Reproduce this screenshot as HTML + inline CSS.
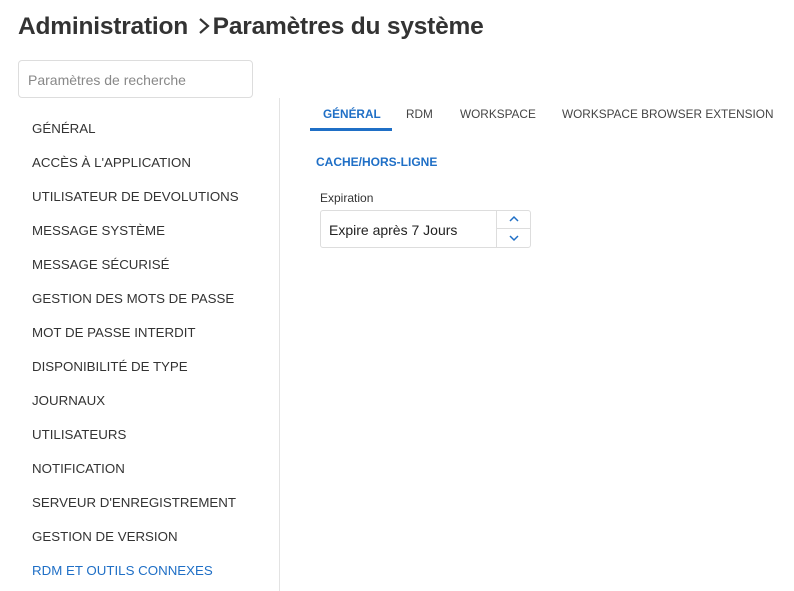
<!DOCTYPE html>
<html><head><meta charset="utf-8"><style>
*{margin:0;padding:0;box-sizing:border-box}
body{width:794px;height:591px;background:#fff;font-family:"Liberation Sans",sans-serif;color:#333;position:relative;overflow:hidden}
.a{position:absolute;white-space:nowrap}
h1{position:absolute;left:18px;top:13px;font-size:24.5px;font-weight:bold;color:#333;letter-spacing:-0.2px}
.search{left:18px;top:60px;width:235px;height:38px;border:1px solid #ddd;border-radius:4px;font-size:14px;color:#888;padding:11px 0 0 9px}
.nav{left:32px;font-size:13.3px;color:#333}
.div{left:279px;top:98px;width:1px;height:493px;background:#e3e3e3}
.tab{top:107px;font-size:11.8px;color:#444}
</style></head><body>
<h1>Administration <svg width="14" height="18" style="vertical-align:-1px;margin:0 2px"><path d="M3 2L11 9L3 16" fill="none" stroke="#333" stroke-width="2.2"/></svg>Paramètres du système</h1>
<div class="a search">Paramètres de recherche</div>
<div class="a div"></div>
<div class="a nav" style="top:121px">GÉNÉRAL</div>
<div class="a nav" style="top:155px">ACCÈS À L'APPLICATION</div>
<div class="a nav" style="top:189px">UTILISATEUR DE DEVOLUTIONS</div>
<div class="a nav" style="top:223px">MESSAGE SYSTÈME</div>
<div class="a nav" style="top:257px">MESSAGE SÉCURISÉ</div>
<div class="a nav" style="top:291px">GESTION DES MOTS DE PASSE</div>
<div class="a nav" style="top:325px">MOT DE PASSE INTERDIT</div>
<div class="a nav" style="top:359px">DISPONIBILITÉ DE TYPE</div>
<div class="a nav" style="top:393px">JOURNAUX</div>
<div class="a nav" style="top:427px">UTILISATEURS</div>
<div class="a nav" style="top:461px">NOTIFICATION</div>
<div class="a nav" style="top:495px">SERVEUR D'ENREGISTREMENT</div>
<div class="a nav" style="top:529px">GESTION DE VERSION</div>
<div class="a nav" style="top:563px;color:#1f6fc6">RDM ET OUTILS CONNEXES</div>
<div class="a tab" style="left:323px;color:#1f6fc6;font-weight:bold">GÉNÉRAL</div>
<div class="a tab" style="left:406px">RDM</div>
<div class="a tab" style="left:460px">WORKSPACE</div>
<div class="a tab" style="left:562px">WORKSPACE BROWSER EXTENSION</div>
<div class="a" style="left:310px;top:128px;width:82px;height:3px;background:#1f6fc6"></div>
<div class="a" style="left:316px;top:155px;font-size:12px;font-weight:bold;color:#1f6fc6">CACHE/HORS-LIGNE</div>
<div class="a" style="left:320px;top:191px;font-size:12px;color:#333">Expiration</div>
<div class="a" style="left:320px;top:210px;width:211px;height:38px;border:1px solid #ddd;border-radius:3px;font-size:14px;padding:11px 0 0 8px;color:#222">Expire après 7 Jours</div>
<div class="a" style="left:496px;top:211px;width:1px;height:36px;background:#ddd"></div>
<div class="a" style="left:497px;top:228px;width:33px;height:1px;background:#ddd"></div>
<svg class="a" style="left:508px;top:215px" width="12" height="8"><path d="M2 6L6 2L10 6" fill="none" stroke="#1f6fc6" stroke-width="1.5"/></svg>
<svg class="a" style="left:508px;top:234px" width="12" height="8"><path d="M2 2L6 6L10 2" fill="none" stroke="#1f6fc6" stroke-width="1.5"/></svg>
</body></html>
